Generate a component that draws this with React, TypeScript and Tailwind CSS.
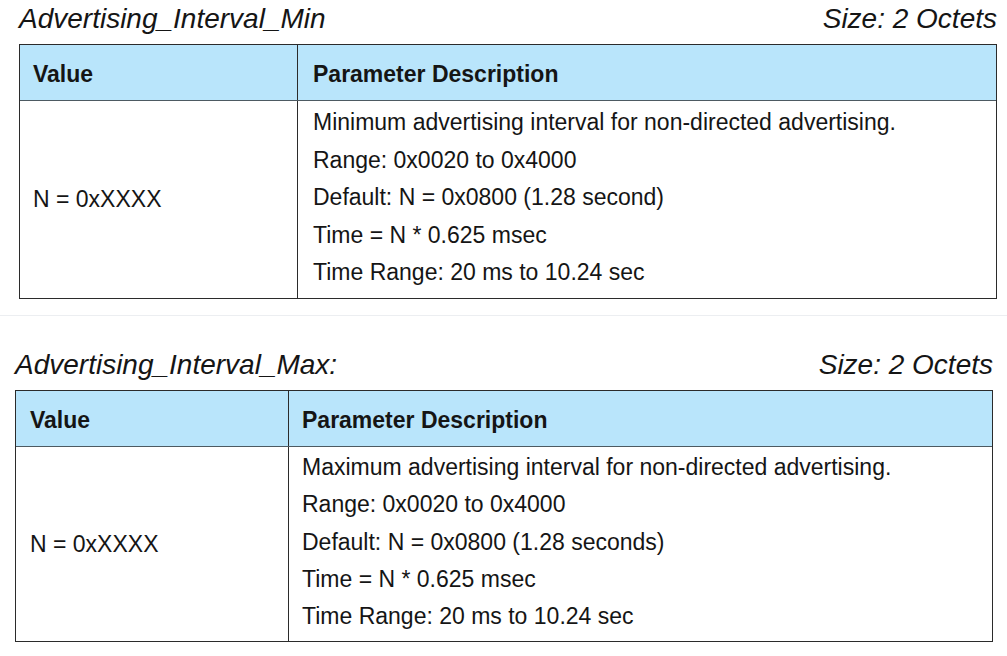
import React from "react";

function ParamTable({
  lines,
  variant,
}: {
  lines: string[];
  variant: 1 | 2;
}) {
  return (
    <div className="border border-[#2b2b2b]">
      <div className="flex h-[56px] bg-[#b9e5fb] border-b border-[#4d5a62]">
        <div
          className={
            variant === 1
              ? "w-[278px] border-r border-[#2b2b2b] pl-[13px] pt-[18px] text-[23px] leading-[23px] font-bold"
              : "w-[273px] border-r border-[#2b2b2b] pl-[14px] pt-[18px] text-[23px] leading-[23px] font-bold"
          }
        >
          Value
        </div>
        <div
          className={
            variant === 1
              ? "flex-1 pl-[15px] pt-[18px] text-[23px] leading-[23px] font-bold"
              : "flex-1 pl-[13px] pt-[18px] text-[23px] leading-[23px] font-bold"
          }
        >
          Parameter Description
        </div>
      </div>
      <div className={variant === 1 ? "flex h-[197px]" : "flex h-[194px]"}>
        <div
          className={
            variant === 1
              ? "w-[278px] border-r border-[#2b2b2b] pl-[13px] flex items-center text-[23px]"
              : "w-[273px] border-r border-[#2b2b2b] pl-[14px] flex items-center text-[23px]"
          }
        >
          N = 0xXXXX
        </div>
        <div
          className={
            variant === 1
              ? "flex-1 pl-[15px] pt-[3px] text-[23px] leading-[37.5px]"
              : "flex-1 pl-[13px] pt-[2px] text-[23px] leading-[37.3px]"
          }
        >
          {lines.map((l) => (
            <div key={l}>{l}</div>
          ))}
        </div>
      </div>
    </div>
  );
}

export default function App() {
  const lines1 = [
    "Minimum advertising interval for non-directed advertising.",
    "Range: 0x0020 to 0x4000",
    "Default: N = 0x0800 (1.28 second)",
    "Time = N * 0.625 msec",
    "Time Range: 20 ms to 10.24 sec",
  ];
  const lines2 = [
    "Maximum advertising interval for non-directed advertising.",
    "Range: 0x0020 to 0x4000",
    "Default: N = 0x0800 (1.28 seconds)",
    "Time = N * 0.625 msec",
    "Time Range: 20 ms to 10.24 sec",
  ];
  return (
    <div className="w-[1007px] h-[656px] bg-white text-[#151515] font-['Liberation_Sans',Arial,sans-serif] overflow-hidden">
      <div className="pl-[19px] pr-[10px]">
        <div className="h-[44px] flex justify-between items-start pt-[5px] text-[28px] leading-[28px] italic">
          <span>Advertising_Interval_Min</span>
          <span>Size: 2 Octets</span>
        </div>
        <ParamTable lines={lines1} variant={1} />
      </div>
      <div className="h-[16px]" />
      <div className="h-px bg-[#eceef1]" />
      <div className="pl-[15px] pr-[14px]">
        <div className="h-[74px] flex justify-between items-start pt-[35px] text-[28px] leading-[28px] italic">
          <span>Advertising_Interval_Max:</span>
          <span>Size: 2 Octets</span>
        </div>
        <ParamTable lines={lines2} variant={2} />
      </div>
    </div>
  );
}
